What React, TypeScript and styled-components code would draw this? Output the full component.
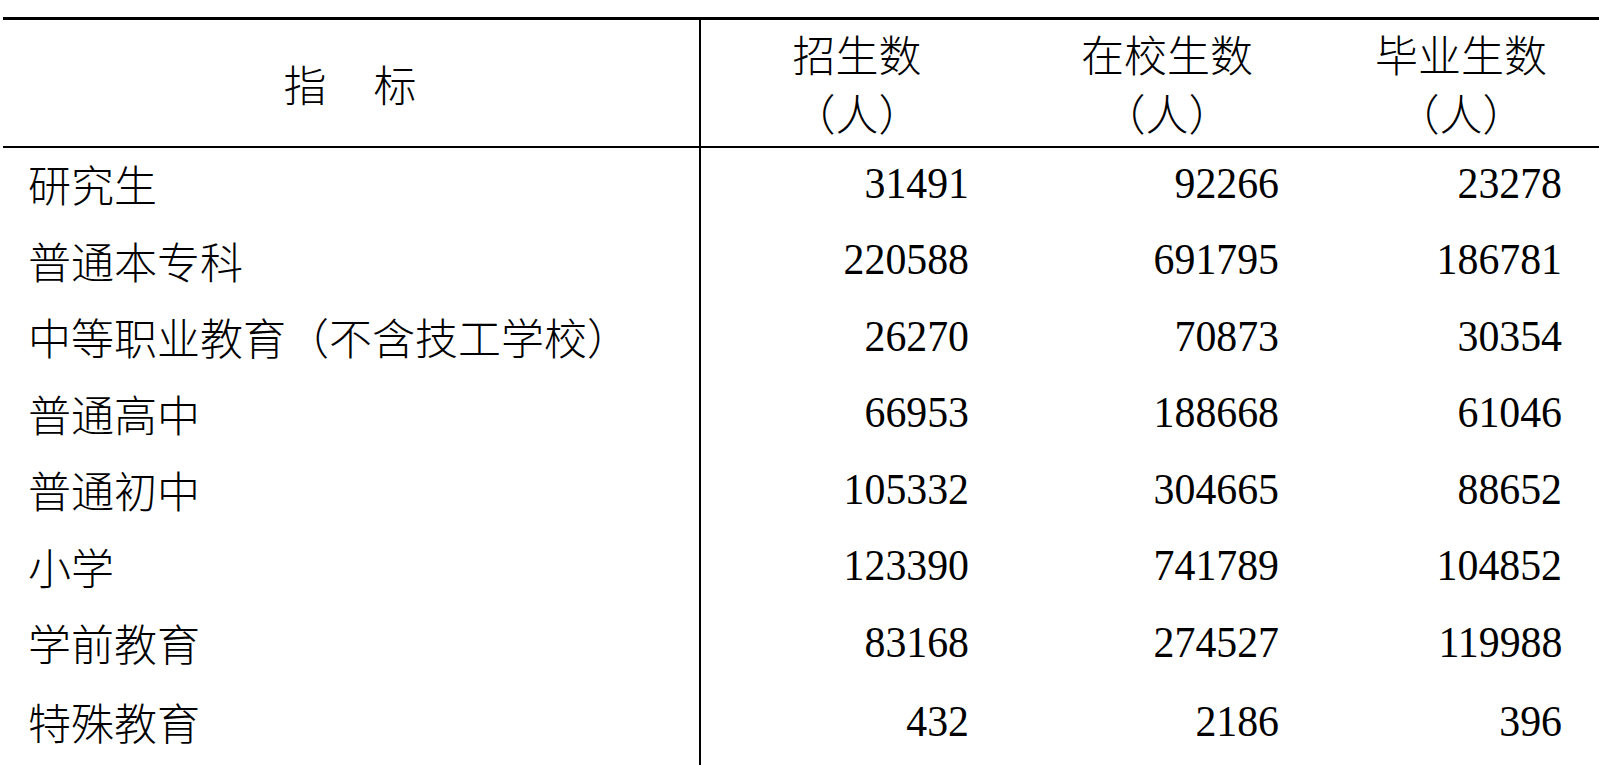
import React from 'react';
import styled, { createGlobalStyle } from 'styled-components';

const GlobalStyle = createGlobalStyle`
  html, body {
    margin: 0;
    padding: 0;
    background: #fff;
  }
  body {
    font-family: "Liberation Serif", "Noto Sans CJK SC", serif;
    color: #000;
  }
`;

const Page = styled.div`
  width: 1599px;
  height: 765px;
  overflow: hidden;
  padding: 17px 0 0 3px;
  box-sizing: border-box;
`;

const Table = styled.div`
  display: grid;
  grid-template-columns: 698px 310px 310px 1fr;
  border-top: 3px solid #000;
`;

const HeaderCell = styled.div<{ $first?: boolean }>`
  height: 126px;
  border-bottom: 2px solid #000;
  border-right: ${({ $first }) => ($first ? '2px solid #000' : 'none')};
  display: flex;
  flex-direction: column;
  align-items: center;
  justify-content: center;
  font-family: "Noto Sans CJK SC", sans-serif;
  font-size: 43px;
  font-weight: 300;
  line-height: 59px;
  padding-left: ${({ $first }) => ($first ? '0' : '2px')};
`;

const HeaderLabel = styled.span`
  letter-spacing: 2px;
`;

const Body = styled.div`
  grid-column: 1 / -1;
  display: grid;
  grid-template-columns: 698px 310px 310px 1fr;
`;

const NameCell = styled.div<{ $last?: boolean; $first?: boolean }>`
  height: ${({ $first }) => ($first ? '78.5px' : '76.5px')};
  box-sizing: border-box;
  border-right: 2px solid #000;
  display: flex;
  align-items: center;
  padding-left: 25px;
  padding-top: ${({ $last, $first }) => ($last ? '5px' : $first ? '2px' : '0')};
  padding-bottom: 10px;
  font-family: "Noto Sans CJK SC", sans-serif;
  font-size: 43px;
  font-weight: 300;
  white-space: nowrap;
`;

const NumCell = styled.div<{ $last?: boolean; $first?: boolean; $pad: number }>`
  height: ${({ $first }) => ($first ? '78.5px' : '76.5px')};
  box-sizing: border-box;
  display: flex;
  align-items: center;
  justify-content: flex-end;
  padding-right: ${({ $pad }) => `${$pad}px`};
  padding-top: ${({ $last, $first }) => ($last ? '5px' : $first ? '2px' : '0')};
  padding-bottom: 10px;
  font-family: "Liberation Serif", "Times New Roman", serif;
  font-size: 44px;
`;

const Num = styled.span`
  display: inline-block;
  transform: scaleX(0.95);
  transform-origin: right center;
`;

const Filler = styled.div`
  height: 60px;
  border-right: 2px solid #000;
`;

const rows: [string, string, string, string][] = [
  ['研究生', '31491', '92266', '23278'],
  ['普通本专科', '220588', '691795', '186781'],
  ['中等职业教育（不含技工学校）', '26270', '70873', '30354'],
  ['普通高中', '66953', '188668', '61046'],
  ['普通初中', '105332', '304665', '88652'],
  ['小学', '123390', '741789', '104852'],
  ['学前教育', '83168', '274527', '119988'],
  ['特殊教育', '432', '2186', '396'],
];

const headers = ['招生数', '在校生数', '毕业生数'];
const pads = [42, 42, 37];

export default function App() {
  return (
    <>
      <GlobalStyle />
      <Page>
        <Table>
          <HeaderCell $first>
            <HeaderLabel>指　标</HeaderLabel>
          </HeaderCell>
          {headers.map((h) => (
            <HeaderCell key={h}>
              <span>{h}</span>
              <span>（人）</span>
            </HeaderCell>
          ))}
          <Body>
            {rows.map(([name, ...nums], i) => {
              const last = i === rows.length - 1;
              const first = i === 0;
              return (
                <React.Fragment key={name}>
                  <NameCell $last={last} $first={first}>{name}</NameCell>
                  {nums.map((n, j) => (
                    <NumCell key={j} $last={last} $first={first} $pad={pads[j]}>
                      <Num>{n}</Num>
                    </NumCell>
                  ))}
                </React.Fragment>
              );
            })}
            <Filler />
          </Body>
        </Table>
      </Page>
    </>
  );
}
